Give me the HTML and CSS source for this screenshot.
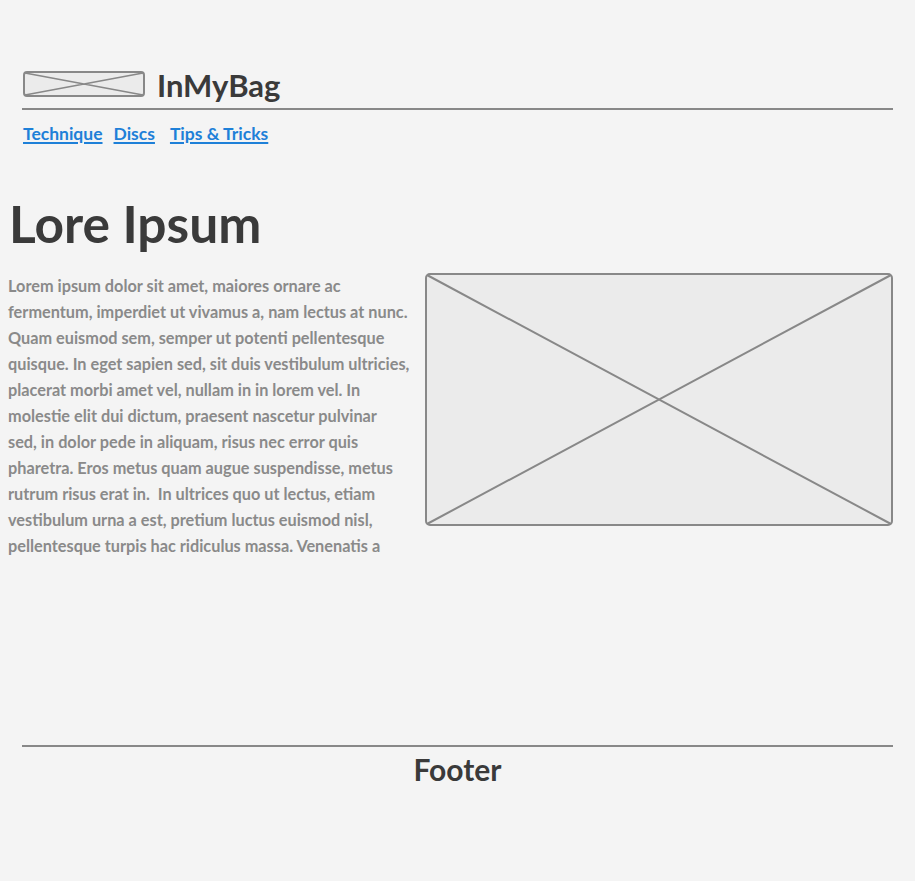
FILE: index.html
```html
<!DOCTYPE html>
<html lang="en">
<head>
<meta charset="utf-8">
<title>InMyBag</title>
<link rel="stylesheet" href="styles.css">
</head>
<body>
<header class="site-header">
  <div class="brand">
    <svg class="logo" width="122" height="26" viewBox="0 0 122 26">
      <rect x="1" y="1" width="120" height="24" rx="3" fill="#ebebeb" stroke="#888" stroke-width="2"/>
      <path d="M2 2 L120 24 M2 24 L120 2" stroke="#888" stroke-width="1.5" fill="none"/>
    </svg>
    <span class="brand-name">InMyBag</span>
  </div>
  <nav class="nav">
    <a href="#">Technique</a>
    <a href="#">Discs</a>
    <a href="#">Tips &amp; Tricks</a>
  </nav>
</header>
<main class="content">
  <h1 class="title">Lore Ipsum</h1>
  <div class="row">
    <p class="text">Lorem ipsum dolor sit amet, maiores ornare ac<br>fermentum, imperdiet ut vivamus a, nam lectus at nunc.<br>Quam euismod sem, semper ut potenti pellentesque<br>quisque. In eget sapien sed, sit duis vestibulum ultricies,<br>placerat morbi amet vel, nullam in in lorem vel. In<br>molestie elit dui dictum, praesent nascetur pulvinar<br>sed, in dolor pede in aliquam, risus nec error quis<br>pharetra. Eros metus quam augue suspendisse, metus<br>rutrum risus erat in.&nbsp; In ultrices quo ut lectus, etiam<br>vestibulum urna a est, pretium luctus euismod nisl,<br>pellentesque turpis hac ridiculus massa. Venenatis a</p>
    <svg class="picture" width="468" height="253" viewBox="0 0 468 253">
      <rect x="1" y="1" width="466" height="251" rx="4" fill="#ebebeb" stroke="#888" stroke-width="2"/>
      <path d="M2 2 L466 251 M2 251 L466 2" stroke="#888" stroke-width="2" fill="none"/>
    </svg>
  </div>
</main>
<footer class="site-footer">
  <div class="footer-title">Footer</div>
</footer>
</body>
</html>
```
FILE: styles.css
```css
html, body {
  margin: 0;
  padding: 0;
}
body {
  background: #f4f4f4;
  font-family: Lato, "Noto Sans", sans-serif;
  color: #3a3a3a;
  width: 915px;
}
.site-header {
  padding: 68px 22px 0 22px;
}
.brand {
  display: flex;
  align-items: center;
  gap: 12px;
  padding-left: 1px;
  padding-bottom: 8px;
  border-bottom: 2px solid #888;
}
.logo {
  display: block;
}
.brand-name {
  font-size: 31px;
  font-weight: 700;
  color: #3a3a3a;
  line-height: 30px;
  padding-top: 2px;
}
.nav {
  display: flex;
  gap: 11px;
  padding: 13px 0 0 1px;
}
.nav a {
  color: #1e80d8;
  font-weight: 700;
  font-size: 17.5px;
  text-decoration: underline;
  text-decoration-thickness: 2px;
  text-underline-offset: 2px;
}
.nav a:nth-child(3) {
  margin-left: 4px;
}
.content {
  padding: 0 0 0 8px;
}
.title {
  margin: 49px 0 0 1px;
  font-size: 51.5px;
  line-height: 60px;
  font-weight: 700;
  color: #3a3a3a;
}
.row {
  display: flex;
  align-items: flex-start;
  gap: 12px;
  margin-top: 20px;
}
.text {
  margin: 0;
  width: 405px;
  font-size: 16.3px;
  line-height: 26px;
  font-weight: 700;
  color: #8a8a8a;
  white-space: nowrap;
}
.picture {
  display: block;
  margin-top: 0;
}
.site-footer {
  margin: 186px 22px 0 22px;
  border-top: 2px solid #888;
  text-align: center;
}
.footer-title {
  font-size: 30px;
  font-weight: 700;
  line-height: 36px;
  padding-top: 4px;
  color: #3a3a3a;
}
```
